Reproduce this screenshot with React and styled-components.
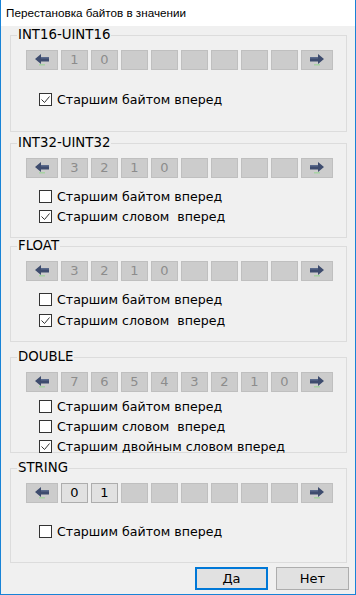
import React from "react";
import styled, { createGlobalStyle } from "styled-components";

const GlobalStyle = createGlobalStyle`
    html, body {
        margin: 0;
        padding: 0;
        background: #f0f0f0;
    }
    * {
        box-sizing: border-box;
    }
`

const Window = styled.div`
    width: 356px;
    height: 595px;
    display: flex;
    flex-direction: column;
    border: 1px solid #1883d7;
    border-top: none;
    background: #f0f0f0;
    font-family: "DejaVu Sans", Verdana, sans-serif;
    font-size: 13px;
    color: #000;
`

const TitleBar = styled.div`
    height: 26px;
    flex-shrink: 0;
    padding-left: 5px;
    background: #fff;
    font-family: "Liberation Sans", Arial, sans-serif;
    font-size: 11.7px;
    line-height: 26px;
`

const Content = styled.div`
    padding: 2px 8px 0 9px;
`

const Group = styled.fieldset`
    margin: ${props => props.$mt}px 0 0 0;
    padding: 0;
    min-width: 0;
    height: ${props => props.$h}px;
    border: 1px solid #dcdcdc;
`

const Legend = styled.legend`
    margin-left: 6px;
    padding: 0 1px;
    font-size: 13.3px;
    line-height: 14px;
`

const GroupBody = styled.div`
    padding: 8px 0 0 15px;
`

const ByteRow = styled.div`
    display: flex;
    gap: 3px;
    height: 20px;
`

const Cell = styled.div`
    width: ${props => props.$arrow ? 32 : 27}px;
    height: 20px;
    display: flex;
    align-items: center;
    justify-content: center;
    background: ${props => props.$active ? "#e1e1e1" : "#cccccc"};
    border: 1px solid ${props => props.$active ? "#adadad" : "#bfbfbf"};
    color: ${props => props.$active ? "#000" : "#8c8c8c"};
    font-size: 13px;
    line-height: 18px;
`

const Options = styled.div`
    display: flex;
    flex-direction: column;
    gap: ${props => props.$gap || 0}px;
    margin-top: ${props => props.$mt}px;
`

const Option = styled.label`
    display: flex;
    align-items: center;
    gap: 5px;
    height: 20px;
    padding-left: 13px;
    font-size: 12.6px;
    white-space: pre;
`

const Box = styled.span`
    width: 13px;
    height: 13px;
    flex-shrink: 0;
    border: 1px solid #333;
    background: #fff;
    display: flex;
`

const Footer = styled.div`
    display: flex;
    justify-content: flex-end;
    gap: 8px;
    margin-top: 4px;
    padding-right: 6px;
`

const Button = styled.button`
    width: 73px;
    height: 23px;
    padding: 0;
    background: #e1e1e1;
    border: ${props => props.$default ? "2px solid #0078d7" : "1px solid #adadad"};
    font-family: "DejaVu Sans", Verdana, sans-serif;
    font-size: 13px;
    color: #000;
`

const Arrow = ({ right }) => (
    <svg width="16" height="14" viewBox="0 0 16 14" style={right ? { transform: "scaleX(-1)" } : undefined}>
        <rect x="5" y="11" width="6" height="1.5" fill="#9fd39a" opacity="0.8" />
        <polygon points="1,6 7,1 7,4 15,4 15,8.5 7,8.5 7,11" fill="#3e4c6e" />
        <polygon points="7,4 15,4 15,5.5 7,5.5" fill="#5a6a8c" />
    </svg>
)

const Check = ({ on }) => (
    <Box>
        {on && (
            <svg width="11" height="11" viewBox="0 0 11 11">
                <polyline points="1.5,5.5 4.5,8.5 9.5,2.5" fill="none" stroke="#333" strokeWidth="1" />
            </svg>
        )}
    </Box>
)

const Bytes = ({ digits, active }) => {
    const cells = Array.from({ length: 8 }, (_, i) => digits[i] ?? "");
    return (
        <ByteRow>
            <Cell $arrow><Arrow /></Cell>
            {cells.map((d, i) => (
                <Cell key={i} $active={active && d !== ""}>{d}</Cell>
            ))}
            <Cell $arrow><Arrow right /></Cell>
        </ByteRow>
    );
}

const groups = [
    { title: "INT16-UINT16", h: 104, mt: 0, digits: ["1", "0"], optMt: 19,
      options: [["Старшим байтом вперед", true]] },
    { title: "INT32-UINT32", h: 102, mt: 4, digits: ["3", "2", "1", "0"], optMt: 8,
      options: [["Старшим байтом вперед", false], ["Старшим словом  вперед", true]] },
    { title: "FLOAT", h: 103, mt: 1, digits: ["3", "2", "1", "0"], optMt: 8, gap: 1,
      options: [["Старшим байтом вперед", false], ["Старшим словом  вперед", true]] },
    { title: "DOUBLE", h: 103, mt: 8, digits: ["7", "6", "5", "4", "3", "2", "1", "0"], optMt: 4,
      options: [["Старшим байтом вперед", false], ["Старшим словом  вперед", false], ["Старшим двойным словом вперед", true]] },
    { title: "STRING", h: 102, mt: 8, digits: ["0", "1"], optMt: 18, active: true,
      options: [["Старшим байтом вперед", false]] },
];

const App = () => {
    return (
        <>
            <GlobalStyle />
            <Window>
                <TitleBar>Перестановка байтов в значении</TitleBar>
                <Content>
                    {groups.map(g => (
                        <Group key={g.title} $h={g.h} $mt={g.mt}>
                            <Legend>{g.title}</Legend>
                            <GroupBody>
                                <Bytes digits={g.digits} active={g.active} />
                                <Options $mt={g.optMt} $gap={g.gap}>
                                    {g.options.map(([text, on]) => (
                                        <Option key={text}>
                                            <Check on={on} />
                                            {text}
                                        </Option>
                                    ))}
                                </Options>
                            </GroupBody>
                        </Group>
                    ))}
                </Content>
                <Footer>
                    <Button $default>Да</Button>
                    <Button>Нет</Button>
                </Footer>
            </Window>
        </>
    );
}

export default App;
